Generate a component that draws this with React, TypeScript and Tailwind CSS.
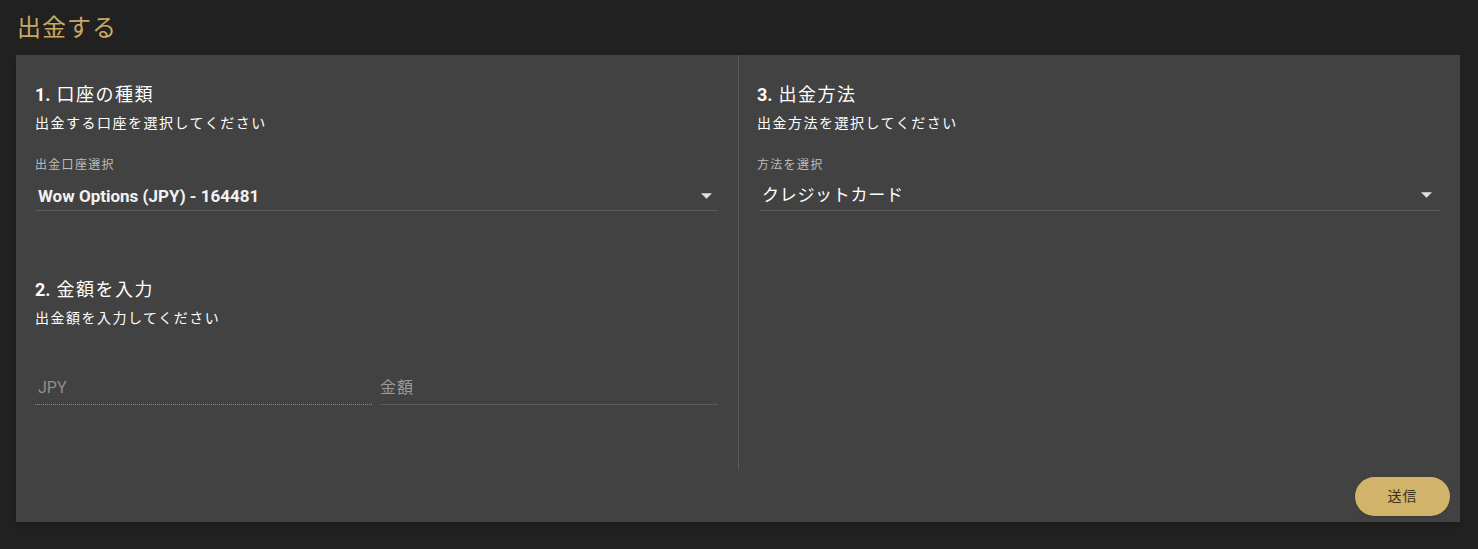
import React from "react";

const font = { fontFamily: "Roboto, 'Noto Sans CJK JP', sans-serif" };

function Caret() {
  return (
    <svg className="w-[11px] h-[6px]" viewBox="0 0 10 5" fill="#e0e0e0">
      <path d="M0 0l5 5 5-5z" />
    </svg>
  );
}

function SectionHead({ num, title, sub }: { num: string; title: string; sub: string }) {
  return (
    <div>
      <h2 className="text-[18px] leading-[24px] text-white tracking-[1.5px]">
        <span className="font-bold tracking-normal">{num}.</span> {title}
      </h2>
      <p className="mt-[6px] text-[14px] leading-[20px] text-white tracking-[1.5px]">{sub}</p>
    </div>
  );
}

export default function App() {
  return (
    <div className="min-h-[549px] w-full bg-[#212121] pb-[27px]" style={font}>
      <div className="h-[55px] flex items-center px-[17px]">
        <h1 className="text-[24px] leading-[30px] text-[#c9a962] tracking-[1px]">出金する</h1>
      </div>

      <div className="mx-[16px] mr-[18px] bg-[#424242] shadow-md flex flex-col">
        <div className="flex h-[415px]">
          <div className="flex-1 pl-[19px] pr-[20px] pt-[28px] border-r border-[#5a5a5a]">
            <SectionHead num="1" title="口座の種類" sub="出金する口座を選択してください" />
            <label className="block mt-[24px] text-[12px] leading-[16px] text-[#bdbdbd] tracking-[1.3px]">出金口座選択</label>
            <div className="mt-[10px] flex items-center justify-between pl-[3px] pr-[6px] pb-[2px] border-b border-[#5c5c5c] h-[28px]">
              <span className="text-[17px] leading-[24px] font-bold text-[#f2f2f2]">Wow Options (JPY) - 164481</span>
              <Caret />
            </div>

            <div className="mt-[67px]">
              <SectionHead num="2" title="金額を入力" sub="出金額を入力してください" />
            </div>
            <div className="mt-[48px] flex gap-[8px]">
              <div className="w-[337px] pl-[3px] pb-[3px] border-b border-dotted border-[#8a8a8a]">
                <span className="text-[16px] leading-[24px] text-[#8e8e8e]">JPY</span>
              </div>
              <div className="flex-1 pb-[4px] border-b border-[#5c5c5c]">
                <span className="text-[16px] leading-[20px] text-[#9a9a9a] tracking-[1px]">金額</span>
              </div>
            </div>
          </div>

          <div className="flex-1 pl-[18px] pr-[20px] pt-[28px]">
            <SectionHead num="3" title="出金方法" sub="出金方法を選択してください" />
            <label className="block mt-[24px] text-[12px] leading-[16px] text-[#bdbdbd] tracking-[1.3px]">方法を選択</label>
            <div className="mt-[10px] flex items-center justify-between pl-[3px] pr-[8px] pb-[4px] border-b border-[#5c5c5c] h-[28px] ml-[2px]">
              <span className="text-[17px] leading-[24px] text-white tracking-[0.7px]">クレジットカード</span>
              <Caret />
            </div>
          </div>
        </div>

        <div className="flex justify-end pt-[7px] pb-[6px] pr-[10px]">
          <button className="w-[95px] h-[39px] rounded-full bg-[#d1b46a] text-[#3a3020] text-[14px] tracking-[1px] shadow">
            送信
          </button>
        </div>
      </div>
    </div>
  );
}
